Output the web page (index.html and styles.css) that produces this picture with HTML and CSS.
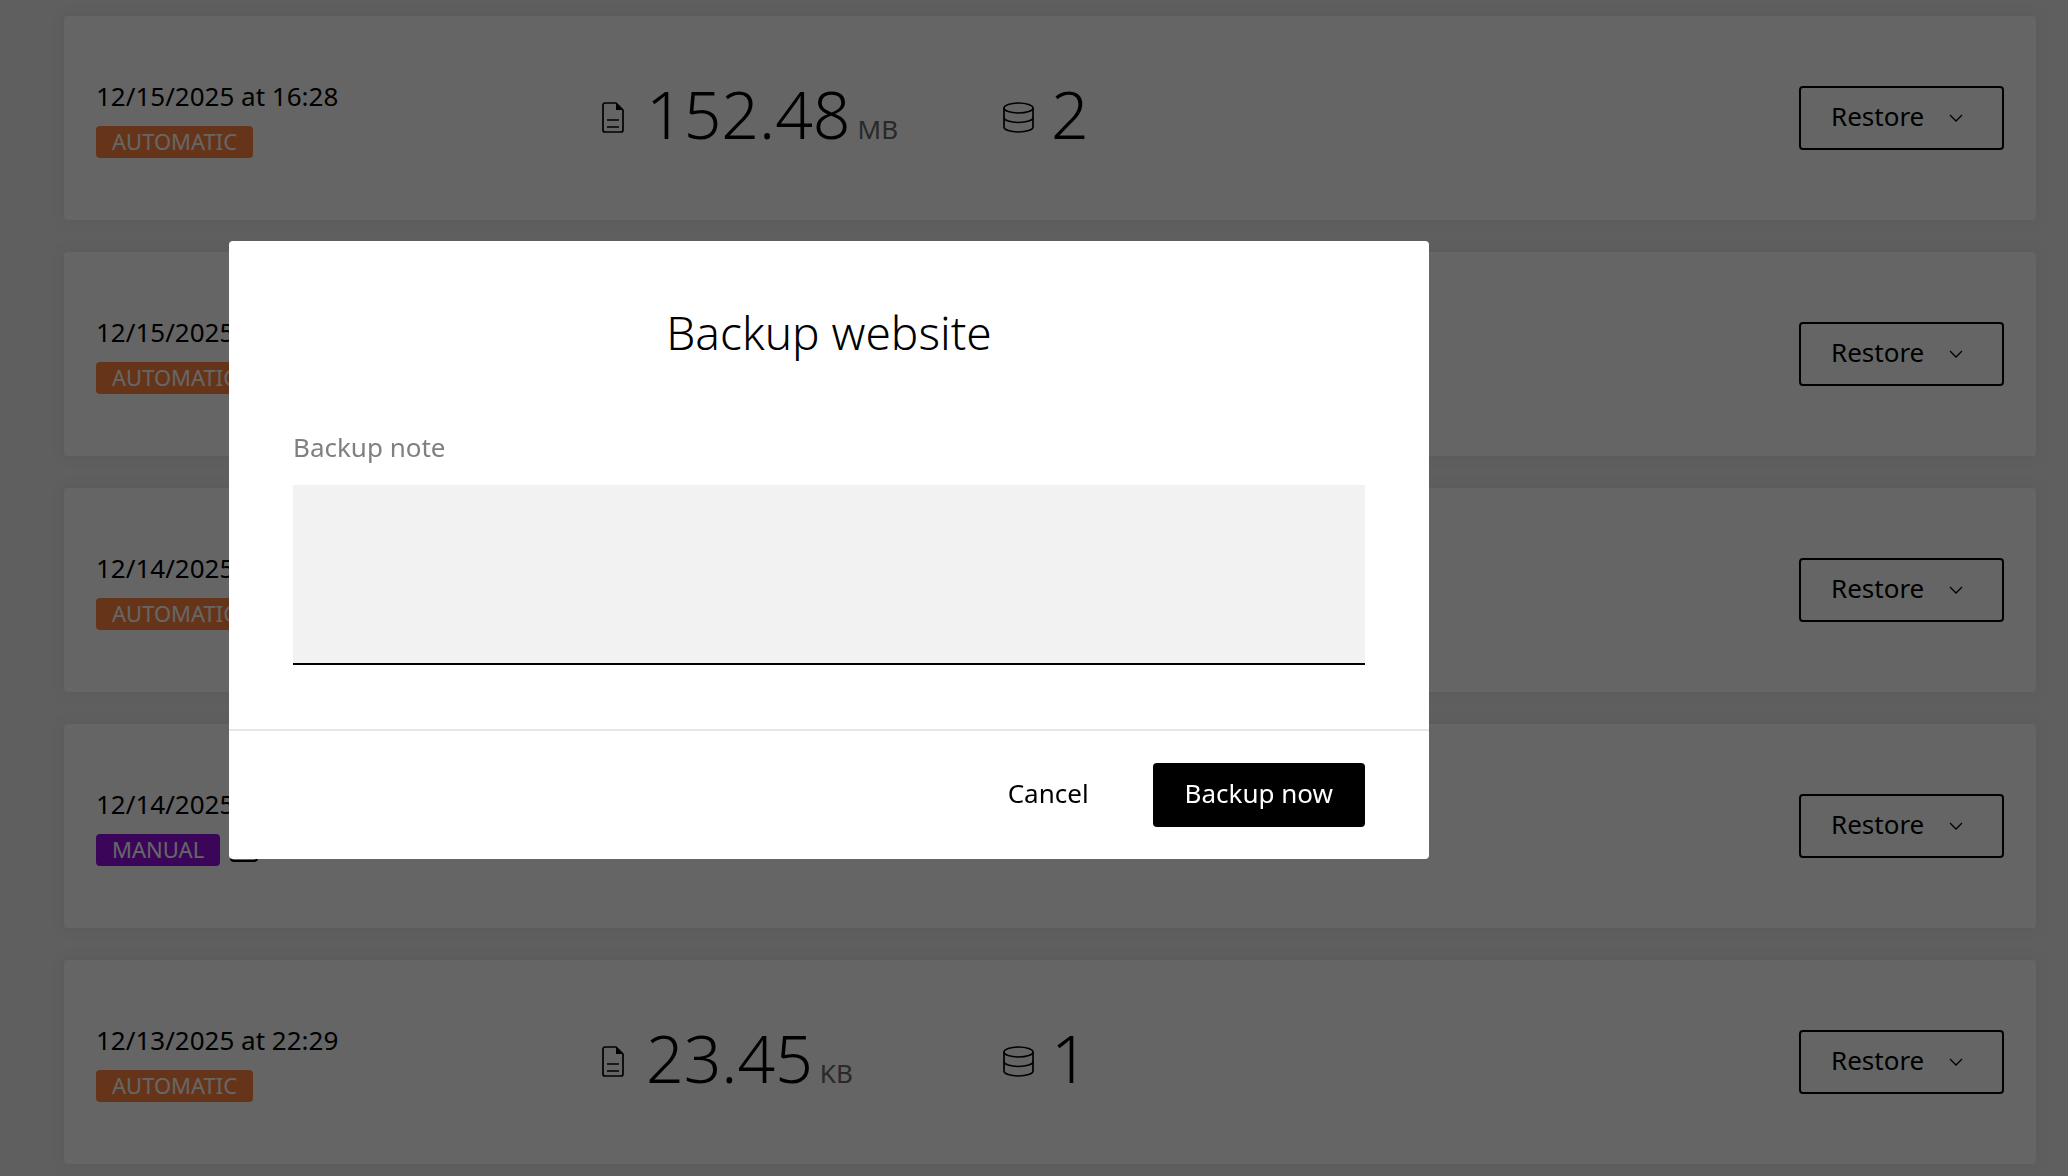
FILE: index.html
```html
<!DOCTYPE html>
<html lang="en">
<head>
<meta charset="utf-8">
<title>Backups</title>
<link rel="stylesheet" href="styles.css">
</head>
<body>
<svg class="defs" width="0" height="0" aria-hidden="true">
  <symbol id="file" viewBox="0 0 22 31"><path d="M3 1h11l7 7v20a2 2 0 0 1-2 2H3a2 2 0 0 1-2-2V3a2 2 0 0 1 2-2z" fill="none" stroke="currentColor" stroke-width="1.700" stroke-linejoin="round"/><path d="M14 1v7h7z" fill="currentColor"/><path d="M5 18h12M5 25h12" stroke="currentColor" stroke-width="1.700" fill="none"/></symbol>
  <symbol id="db" viewBox="0 0 31 31"><g fill="none" stroke="currentColor" stroke-width="1.700"><ellipse cx="15.500" cy="6" rx="14.500" ry="5"/><path d="M1 6v19c0 2.800 6.500 5 14.500 5s14.500-2.200 14.500-5V6"/><path d="M1 15.500c0 2.800 6.500 5 14.500 5s14.500-2.200 14.500-5"/></g></symbol>
  <symbol id="chev" viewBox="0 0 14 8"><path d="M1 1l6 6 6-6" fill="none" stroke="currentColor" stroke-width="1.300"/></symbol>
</svg>
<main class="list">
  <article class="card">
    <div class="info"><div class="date">12/15/2025 at 16:28</div><div class="tags"><span class="badge auto">AUTOMATIC</span></div></div>
    <div class="stat size"><svg class="i-file"><use href="#file"/></svg><span class="num">152.48</span><span class="unit">MB</span></div>
    <div class="stat count"><svg class="i-db"><use href="#db"/></svg><span class="num">2</span></div>
    <button class="restore">Restore<svg class="i-chev"><use href="#chev"/></svg></button>
  </article>
  <article class="card">
    <div class="info"><div class="date">12/15/2025 at 04:12</div><div class="tags"><span class="badge auto">AUTOMATIC</span></div></div>
    <div class="stat size"><svg class="i-file"><use href="#file"/></svg><span class="num">152.47</span><span class="unit">MB</span></div>
    <div class="stat count"><svg class="i-db"><use href="#db"/></svg><span class="num">2</span></div>
    <button class="restore">Restore<svg class="i-chev"><use href="#chev"/></svg></button>
  </article>
  <article class="card">
    <div class="info"><div class="date">12/14/2025 at 16:28</div><div class="tags"><span class="badge auto">AUTOMATIC</span></div></div>
    <div class="stat size"><svg class="i-file"><use href="#file"/></svg><span class="num">152.47</span><span class="unit">MB</span></div>
    <div class="stat count"><svg class="i-db"><use href="#db"/></svg><span class="num">2</span></div>
    <button class="restore">Restore<svg class="i-chev"><use href="#chev"/></svg></button>
  </article>
  <article class="card">
    <div class="info"><div class="date">12/14/2025 at 10:05</div><div class="tags"><span class="badge manual">MANUAL</span><span class="note-btn"></span></div></div>
    <div class="stat size"><svg class="i-file"><use href="#file"/></svg><span class="num">152.46</span><span class="unit">MB</span></div>
    <div class="stat count"><svg class="i-db"><use href="#db"/></svg><span class="num">2</span></div>
    <button class="restore">Restore<svg class="i-chev"><use href="#chev"/></svg></button>
  </article>
  <article class="card">
    <div class="info"><div class="date">12/13/2025 at 22:29</div><div class="tags"><span class="badge auto">AUTOMATIC</span></div></div>
    <div class="stat size"><svg class="i-file"><use href="#file"/></svg><span class="num">23.45</span><span class="unit">KB</span></div>
    <div class="stat count"><svg class="i-db"><use href="#db"/></svg><span class="num">1</span></div>
    <button class="restore">Restore<svg class="i-chev"><use href="#chev"/></svg></button>
  </article>
</main>
<div class="overlay"></div>
<section class="modal">
  <h2 class="modal-title">Backup website</h2>
  <div class="modal-body">
    <label class="field-label" for="note">Backup note</label>
    <textarea class="field" id="note"></textarea>
  </div>
  <footer class="modal-foot">
    <button class="btn-text">Cancel</button>
    <button class="btn-primary">Backup now</button>
  </footer>
</section>
</body>
</html>
```
FILE: styles.css
```css
* { box-sizing: border-box; }
html, body { height: 100%; }
body {
  margin: 0;
  background: #ededed;
  color: #000;
  font-family: "Noto Sans", sans-serif;
  font-size: 26px;
  overflow: hidden;
}
.defs { position: absolute; }
.list {
  display: flex;
  flex-direction: column;
  gap: 32px;
  padding: 16px 32px 12px 64px;
}
.card {
  display: flex;
  align-items: center;
  height: 204px;
  padding: 0 32px;
  background: #fcfcfc;
  border-radius: 4px;
  box-shadow: 0 0 14px 4px rgba(0, 0, 0, .04);
}
.info { width: 504px; flex: none; padding-top: 2px; }
.date { line-height: 33px; margin-bottom: 13px; }
.tags { display: flex; align-items: center; gap: 10px; height: 32px; }
.badge {
  display: inline-flex;
  align-items: center;
  height: 32px;
  padding: 0 16px 2px;
  border-radius: 4px;
  color: #fff;
  font-size: 22px;
}
.auto { background: #ff8540; }
.manual { background: #9310e0; }
.note-btn { width: 28px; height: 28px; margin-bottom: 4px; border: 2px solid #000; border-radius: 4px; }
.stat { display: flex; align-items: center; flex: none; padding-bottom: 10px; }
.size { width: 403px; }
.count { flex: 1; }
.num { font-size: 66px; font-weight: 300; line-height: 80px; }
.unit { font-size: 26px; color: #666; margin-left: 7px; align-self: flex-end; line-height: 40px; margin-bottom: 4px; }
.i-file { width: 22px; height: 31px; margin: 9px 22px 0 2px; }
.i-db { width: 31px; height: 31px; margin: 9px 17px 0 0; }
.restore {
  display: flex;
  align-items: center;
  gap: 25px;
  width: 205px;
  height: 64px;
  padding: 0 30px 4px;
  background: transparent;
  border: 2px solid #000;
  border-radius: 4px;
  color: #000;
  font: inherit;
}
.i-chev { width: 14px; height: 8px; margin-top: 4px; }
.overlay { position: fixed; inset: 0; background: rgba(0, 0, 0, .6); }
.modal {
  position: fixed;
  left: 229px;
  top: 241px;
  width: 1200px;
  height: 618px;
  background: #fff;
  border-radius: 4px;
  display: flex;
  flex-direction: column;
}
.modal-title {
  margin: 0;
  padding-top: 58px;
  font-size: 46px;
  font-weight: 300;
  line-height: 66px;
  text-align: center;
}
.modal-body { flex: 1; padding: 0 64px; }
.field-label { display: block; margin-top: 64px; color: #808080; line-height: 36px; }
.field {
  display: block;
  width: 100%;
  height: 180px;
  margin-top: 20px;
  background: #f2f2f2;
  border: 0;
  border-bottom: 2px solid #000;
  border-radius: 0;
  resize: none;
}
.modal-foot {
  display: flex;
  align-items: center;
  justify-content: flex-end;
  gap: 32px;
  height: 130px;
  padding: 0 64px;
  border-top: 2px solid #e6e6e6;
}
.btn-text, .btn-primary {
  height: 64px;
  padding: 0 32px 4px;
  border: 0;
  border-radius: 4px;
  font: inherit;
}
.btn-text { background: transparent; color: #000; }
.btn-primary { background: #000; color: #fff; }
```
